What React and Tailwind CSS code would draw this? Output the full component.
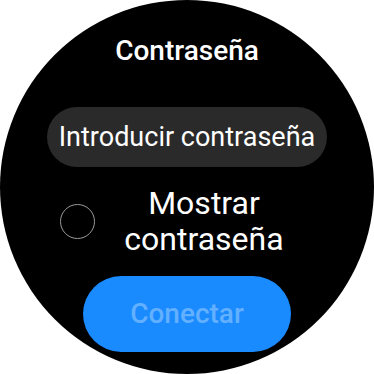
import React, { useState } from 'react';

const App = () => {
  const [showPassword, setShowPassword] = useState(false);

  return (
    <div className="w-[374px] h-[374px] bg-white" style={{ fontFamily: 'Roboto, "Noto Sans", sans-serif' }}>
      <div className="w-[374px] h-[374px] rounded-full bg-black flex flex-col items-center overflow-hidden">
        {/* Title */}
        <h1 className="mt-[35px] text-[28px] leading-[32px] font-medium text-white">Contraseña</h1>

        {/* Password field */}
        <div className="mt-[40px] w-[280px] h-[60px] rounded-full bg-[#2a2a2a] flex items-center justify-center">
          <span className="text-[27px] leading-[32px] text-white whitespace-nowrap">Introducir contraseña</span>
        </div>

        {/* Show password */}
        <div className="mt-[18px] w-full flex items-center">
          <button
            onClick={() => setShowPassword(!showPassword)}
            className="ml-[60px] w-[35px] h-[35px] rounded-full border-[1.5px] border-[#9a9a9a] shrink-0"
          />
          <div className="ml-[9px] w-[200px] text-center text-[32px] leading-[36px] text-white">
            Mostrar
            <br />
            contraseña
          </div>
        </div>

        {/* Connect */}
        <button className="mt-[19px] w-[208px] h-[76px] rounded-full bg-[#1a8aff] flex items-center justify-center">
          <span className="text-[28px] leading-[32px] font-medium text-[#62b0ff]">Conectar</span>
        </button>
      </div>
    </div>
  );
};

export default App;
